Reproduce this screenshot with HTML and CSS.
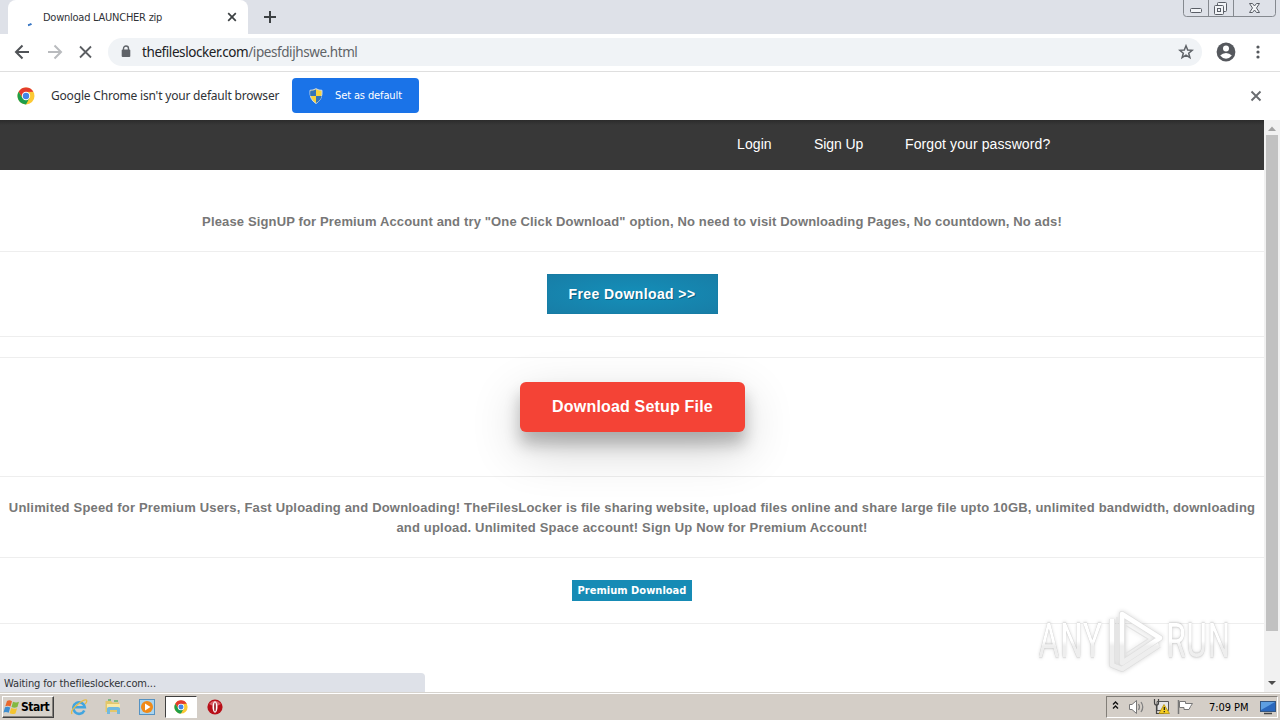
FILE: index.html
```html
<!DOCTYPE html>
<html lang="en">
<head>
<meta charset="utf-8">
<title>Download LAUNCHER zip</title>
<link rel="stylesheet" href="styles.css">
</head>
<body>
<svg class="defs" width="0" height="0">
  <symbol id="chrome" viewBox="0 0 18 18">
    <circle cx="9" cy="9" r="8.5" fill="#fcc934"/>
    <path d="M1.6 4.8A8.5 8.5 0 0 1 16.4 4.8L9 5 5.6 11Z" fill="#e33b2e"/>
    <path d="M1.6 4.8A8.5 8.5 0 0 0 9 17.5L12.5 11 5.5 11Z" fill="#1e9e4a"/>
    <circle cx="9" cy="9" r="4.2" fill="#fff"/>
    <circle cx="9" cy="9" r="3.2" fill="#4285e8"/>
  </symbol>
  <linearGradient id="mark" x1="0" y1="0" x2="0" y2="64" gradientUnits="userSpaceOnUse">
    <stop offset=".5" stop-color="#fff"/><stop offset=".58" stop-color="#eee"/>
  </linearGradient>
</svg>
<header class="tabstrip">
  <div class="tab">
    <svg class="spinner" width="16" height="16" viewBox="0 0 16 16"><path d="M6 14.200Q8 13.900 9.500 12.800" fill="none" stroke="#3b78c4" stroke-width="2"/></svg>
    <span class="tab-title">Download LAUNCHER zip</span>
    <svg class="tab-close" width="10" height="10" viewBox="0 0 10 10"><path d="M1.200 1.200 8.800 8.800M8.800 1.200 1.200 8.800" stroke="#3c4043" stroke-width="1.700"/></svg>
  </div>
  <svg class="newtab" width="14" height="14" viewBox="0 0 14 14"><path d="M7 1V13M1 7H13" stroke="#3c4043" stroke-width="2"/></svg>
  <svg class="winbuttons" width="94" height="18" viewBox="0 0 94 18">
    <path d="M.5 0V13.500Q.5 16.500 3.500 16.500H89.500Q92.500 16.500 92.500 13.500V0M25.500 0V16M50.500 0V16" fill="none" stroke="#85898f"/>
    <g fill="#f2f4f7" stroke="#5a5e66">
      <rect x="7.500" y="8.500" width="11" height="4" rx="1"/>
      <rect x="34.500" y="2.500" width="9" height="9" rx="1"/>
      <rect x="31.500" y="5.500" width="9" height="9" rx="1"/>
      <rect x="34.500" y="8.500" width="3" height="3"/>
      <path d="M66.500 3.500H69.500L71.500 6 73.500 3.500H76.500L73.500 8 76.500 12.500H73.500L71.500 10 69.500 12.500H66.500L69.500 8Z"/>
    </g>
  </svg>
</header>
<div class="toolbar">
  <svg class="nav-icons" width="92" height="20" viewBox="0 0 92 20" fill="none" stroke-width="2">
    <path d="M15 10H2M8.500 3.500 2 10 8.500 16.500" stroke="#505357"/>
    <path d="M34 10H47M40.500 3.500 47 10 40.500 16.500" stroke="#b9bbbe"/>
    <path d="M66 4.500 77 15.500M77 4.500 66 15.500" stroke="#5b5e62" stroke-width="1.800"/>
  </svg>
  <div class="omnibox">
    <svg width="10" height="13" viewBox="0 0 10 13"><path d="M2.500 5V3.500A2.500 2.500 0 0 1 7.500 3.500V5" fill="none" stroke="#5f6368" stroke-width="1.400"/><rect x=".7" y="4.500" width="8.600" height="7.500" rx="1" fill="#5f6368"/></svg>
    <span class="url"><span class="host">thefileslocker.com</span>/ipesfdijhswe.html</span>
    <svg class="star" width="16" height="16" viewBox="0 0 16 16"><path d="M8 1.800 9.700 6 14.200 6.300 10.700 9.200 11.900 13.700 8 11.200 4.100 13.700 5.300 9.200 1.800 6.300 6.300 6Z" fill="none" stroke="#5f6368" stroke-width="1.500"/></svg>
  </div>
  <svg class="avatar" width="20" height="20" viewBox="0 0 20 20"><circle cx="10" cy="10" r="9.400" fill="#55585d"/><circle cx="10" cy="6.600" r="3" fill="#fff"/><path d="M4.200 13.600Q6.500 11 10 11T15.800 13.600Q13.500 16.700 10 16.700T4.200 13.600Z" fill="#fff"/></svg>
  <svg class="dots" width="4" height="16" viewBox="0 0 4 16" fill="#55585d"><circle cx="2" cy="3" r="1.600"/><circle cx="2" cy="8" r="1.600"/><circle cx="2" cy="13" r="1.600"/></svg>
</div>
<div class="infobar">
  <svg width="18" height="18"><use href="#chrome"/></svg>
  <span class="info-text">Google Chrome isn't your default browser</span>
  <button class="default-btn">
    <svg width="16" height="16" viewBox="0 0 16 16"><path d="M8 .7Q11 2.500 14 2.300 14.800 11.500 8 15.500 1.200 11.500 2 2.300 5 2.500 8 .7Z" fill="#f6d33c" stroke="#d4dce5"/><path d="M8 1.500V8H2.300Q1.900 5 2.400 2.800 5.500 2.800 8 1.500ZM8 8H13.700Q12.800 12.500 8 15Z" fill="#3274b9"/></svg>
    <span>Set as default</span>
  </button>
  <svg class="info-close" width="12" height="12" viewBox="0 0 12 12"><path d="M1.500 1.500 10.500 10.500M10.500 1.500 1.500 10.500" stroke="#696c70" stroke-width="1.900"/></svg>
</div>
<div class="viewport">
  <main class="page">
    <nav class="sitenav"><a class="login">Login</a><a class="signup">Sign Up</a><a class="forgot">Forgot your password?</a></nav>
    <section class="row promo"><p class="promo-text">Please SignUP for Premium Account and try "One Click Download" option, No need to visit Downloading Pages, No countdown, No ads!</p></section>
    <section class="row free"><button class="free-btn"><span>Free Download &gt;&gt;</span></button></section>
    <section class="row spacer"></section>
    <section class="row setup"><button class="setup-btn"><span>Download Setup File</span></button></section>
    <section class="row about"><p><span class="about-one">Unlimited Speed for Premium Users, Fast Uploading and Downloading! TheFilesLocker is file sharing website, upload files online and share large file upto 10GB, unlimited bandwidth, downloading</span><br><span class="about-two">and upload. Unlimited Space account! Sign Up Now for Premium Account!</span></p></section>
    <section class="row premium"><button class="premium-btn"><span>Premium Download</span></button></section>
  </main>
  <aside class="scrollbar">
    <svg width="16" height="15" viewBox="0 0 16 15"><path d="M4 11 8 6.500 12 11Z" fill="#a3a3a3"/></svg>
    <div class="thumb"></div>
    <svg class="down" width="16" height="17" viewBox="0 0 16 17"><path d="M4 6 8 10 12 6Z" fill="#4d4d4d"/></svg>
  </aside>
  <div class="status"><span>Waiting for thefileslocker.com...</span></div>
  <div class="watermark">
    <span class="wm any">ANY</span>
    <svg width="60" height="64" viewBox="0 0 60 64" fill="none" stroke-linejoin="round">
      <g stroke="#dedede" stroke-width="6"><path d="M17 5 55 29 17 54Z"/><path d="M7 10V56L17 60 54 36"/></g>
      <g stroke="url(#mark)" stroke-width="4.500"><path d="M17 5 55 29 17 54Z"/><path d="M7 10V56L17 60 54 36"/></g>
      <path d="M12 8V56M20 16 43 30 20 45Z" stroke="#e3e3e3" stroke-width="1.200"/>
    </svg>
    <span class="wm run">RUN</span>
  </div>
</div>
<footer class="taskbar">
  <button class="start">
    <svg width="18" height="16" viewBox="0 0 18 16"><path d="M4 2Q6.500.5 9 2.300L7.500 7.500Q5 6 2.300 7.200Z" fill="#e9682c"/><path d="M10 2.700Q13 4.300 16 2.800L14.400 8Q11.500 9.500 8.500 8Z" fill="#83b940"/><path d="M2 8.200Q4.800 7 7.200 8.600L5.700 13.800Q3.300 12.200.5 13.400Z" fill="#3e8ed0"/><path d="M8.200 9Q11.300 10.500 14.100 9.200L12.500 14.400Q9.500 15.700 6.600 14.300Z" fill="#f4c430"/></svg>
    <span>Start</span>
  </button>
  <div class="tasks">
    <svg class="task" width="18" height="18" viewBox="0 0 18 18"><path d="M14.300 12.500A5.800 5.800 0 1 1 14.800 9.300H5" fill="none" stroke="#42a5df" stroke-width="2.600"/><path d="M2 16Q0 13 7 7T16.500 2Q17.500 3.500 15 6" fill="none" stroke="#e7bc45" stroke-width="1.300"/></svg>
    <svg class="task" width="18" height="18" viewBox="0 0 18 18"><path d="M1.500 3H7L8.500 4.500H15V14H1.500Z" fill="#e3c76b"/><path d="M3 6H16V10H3Z" fill="#fae9a5"/><path d="M3 16V10.500Q3 9 5 9H14Q16 9 16 10.500V16H13V12H6V16Z" fill="#71b9df"/><path d="M4 2H7M10 3H14" stroke="#62b36f" stroke-width="1.500"/></svg>
    <svg class="task" width="18" height="18" viewBox="0 0 18 18"><rect x="1.500" y="1.500" width="15" height="15" fill="#a9d4ef" stroke="#5592c2"/><circle cx="9" cy="9" r="6" fill="#f08a18"/><path d="M7 5.500 12.500 9 7 12.500Z" fill="#fff"/></svg>
    <div class="active-task"><svg width="14" height="14"><use href="#chrome"/></svg></div>
    <svg class="task opera" width="18" height="18" viewBox="0 0 18 18"><circle cx="9" cy="9" r="7.600" fill="#b80f18"/><path d="M3 6Q9-.5 15 6Q12 8 9 8T3 6Z" fill="#d9636a"/><ellipse cx="9" cy="9" rx="2.500" ry="5.800" fill="#fff"/><ellipse cx="9" cy="9" rx=".8" ry="4.600" fill="#8b0a10"/></svg>
  </div>
  <div class="tray">
    <svg width="94" height="18" viewBox="0 0 94 18" fill="none">
      <path d="M6 6.500 8.500 4 11 6.500M6 10.500 8.500 8 11 10.500" stroke="#111" stroke-width="1.400"/>
      <path d="M22.500 6.500H25L29.500 2.500V15.500L25 11.500H22.500Z" fill="#fff" stroke="#777"/>
      <path d="M31.500 6Q33.500 9 31.500 12M34 4Q37.500 9 34 14" stroke="#828282" stroke-width="1.300"/>
      <path d="M50 3.500H61.500V12.500H50Z" fill="#e5e5e5" stroke="#555"/><path d="M47.500 1V5Q47.500 7 49.500 7T51.500 5V1M49.500 7V15.500H57" stroke="#444" stroke-width="1.200"/>
      <path d="M57 6.500 62.500 15.500H52Z" fill="#f5cd20" stroke="#ab8800" stroke-width=".7"/><path d="M57.300 9V12M57.300 13V14.300" stroke="#222" stroke-width="1.300"/>
      <path d="M71.500 2V16" stroke="#777" stroke-width="1.500"/><path d="M72.500 3.500H78.500V5.500H85.500L83.500 8.500 82 11.500H77V9.500H72.500Z" fill="#fff" stroke="#777"/>
    </svg>
    <span class="clock">7:09 PM</span>
    <svg class="desktop" width="16" height="16" viewBox="0 0 16 16"><rect x=".5" y="2.500" width="15" height="10" fill="#2b68bd" stroke="#345681"/><path d="M1 3H15L1 11Z" fill="#5e9fe2"/><path d="M4 14.500H12" stroke="#444" stroke-width="1.500"/></svg>
  </div>
</footer>
</body>
</html>
```
FILE: styles.css
```css
* { box-sizing: border-box; }
body { margin: 0; width: 1280px; height: 720px; overflow: hidden; display: flex; flex-direction: column; background: #fff; font-family: "DejaVu Sans Condensed", "DejaVu Sans", sans-serif; font-stretch: condensed; font-size: 11px; color: #303236; }
svg { display: block; flex: none; }
.defs { position: absolute; }
button { border: 0; margin: 0; padding: 0; display: flex; align-items: center; font: inherit; }
span, a { white-space: nowrap; }
.tabstrip { height: 34px; flex: none; background: #dee1e8; display: flex; align-items: flex-start; padding-left: 8px; }
.tab { width: 240px; height: 34px; background: #fff; border-radius: 8px 8px 0 0; display: flex; align-items: center; padding-left: 14px; flex: none; }
.spinner { margin: 3px 5px 0 0; }
.tab-title { width: 184px; letter-spacing: -.25px; }
.newtab { margin: 10px 0 0 15px; }
.winbuttons { margin: 0 3px 0 auto; }
.toolbar { height: 38px; flex: none; display: flex; align-items: center; padding: 0 20px 2px 14px; border-bottom: 1px solid #dfdfdf; }
.nav-icons { margin-right: 2px; }
.omnibox { width: 1094px; height: 28px; border-radius: 14px; background: #f0f3f6; display: flex; align-items: center; padding: 0 8px 0 13px; }
.url { margin-left: 11px; font-family: "Noto Sans", sans-serif; font-size: 13.5px; color: #606367; letter-spacing: -.42px; }
.host { color: #202124; }
.star { margin-left: auto; }
.avatar { margin-left: 14px; }
.dots { margin-left: auto; }
.infobar { height: 48px; flex: none; display: flex; align-items: center; padding: 0 18px 1px 17px; }
.info-text { margin-left: 16px; width: 241px; font-family: "Noto Sans", sans-serif; font-size: 12px; letter-spacing: -.19px; }
.default-btn { width: 127px; height: 35px; background: #1a73e8; border-radius: 4px; color: #fff; padding-left: 16px; gap: 11px; letter-spacing: -.12px; }
.info-close { margin-left: auto; }
.viewport { height: 572px; flex: none; display: flex; position: relative; }
.page { width: 1264px; font-family: "Liberation Sans", Arial, sans-serif; }
.sitenav { height: 50px; background: linear-gradient(#2b2b2b, #383838 5px); color: #fff; display: flex; align-items: center; padding: 0 0 2px 737px; font-size: 14px; letter-spacing: .1px; }
.login { width: 77px; }
.signup { width: 91px; letter-spacing: -.1px; }
.row { border-bottom: 1px solid #eee; display: flex; justify-content: center; font-weight: bold; }
.row p { margin: 0; text-align: center; color: #777; font-size: 13px; line-height: 20px; }
.promo { height: 82px; padding-top: 42px; }
.row .promo-text { letter-spacing: .143px; white-space: nowrap; }
.free { height: 85px; padding-top: 22px; }
.free-btn { width: 171px; height: 40px; background: radial-gradient(ellipse at center, #148fb9, #187da6); box-shadow: inset 0 0 1px #176481; justify-content: center; color: #fff; font-size: 14px; font-weight: bold; letter-spacing: .4px; text-shadow: 1px 1px #086184; }
.spacer { height: 21px; }
.setup { height: 119px; padding-top: 24px; }
.setup-btn { width: 225px; height: 50px; background: #f44336; border-radius: 6px; justify-content: center; color: #fff; font-size: 16px; font-weight: bold; letter-spacing: .18px; box-shadow: 0 12px 16px rgba(0,0,0,.24), 0 17px 50px rgba(0,0,0,.19); margin-left: 1px; }
.about { height: 81px; padding-top: 21px; }
.about-one { letter-spacing: .187px; }
.about-two { letter-spacing: .177px; }
.premium { height: 66px; padding-top: 22px; }
.premium-btn { width: 120px; height: 21px; background: #168bb5; justify-content: center; color: #fff; font-family: "DejaVu Sans Condensed", sans-serif; font-size: 11px; font-weight: bold; letter-spacing: .02px; }
.scrollbar { width: 16px; background: #f1f1f1; display: flex; flex-direction: column; }
.thumb { width: 12px; height: 496px; margin-left: 2px; background: #c1c1c1; }
.down { margin-top: auto; }
.status { position: absolute; left: 0; bottom: 0; width: 425px; height: 19px; background: #dee1e8; border-top-right-radius: 4px; padding: 4px; line-height: 13px; letter-spacing: -.12px; }
.watermark { position: absolute; left: 1038px; top: 488px; height: 66px; display: flex; align-items: center; }
.watermark svg { margin-left: 3px; filter: drop-shadow(0 0 2px rgba(0,0,0,.16)); }
.wm { display: block; font-family: Roboto, sans-serif; font-size: 49px; line-height: 64px; color: transparent; background: linear-gradient(#fff 50%, #eee 58%); background-clip: text; -webkit-background-clip: text; filter: drop-shadow(0 0 1px rgba(0,0,0,.22)) drop-shadow(0 0 2px rgba(0,0,0,.16)); transform: scaleX(.77); transform-origin: left; }
.any { width: 86px; margin-right: -22px; }
.run { margin-left: 1px; transform: scaleX(.79); }
.run { margin-right: -20px; transform: scaleX(.77); }
.taskbar { height: 28px; flex: none; background: #d4cec7; border-top: 1px solid #d6d3ce; box-shadow: inset 0 1px #fff; display: flex; padding: 3px 2px 1px; }
.start { width: 52px; height: 22px; background: #d6d1ca; border: 1px solid; border-color: #fff #404040 #404040 #fff; box-shadow: inset -1px -1px #85817c; padding-left: 0; font-size: 12px; font-weight: bold; color: #000; letter-spacing: -.5px; }
.tasks { display: flex; align-items: center; margin-left: 16px; height: 22px; }
.task { margin-right: 16px; }
.task:nth-child(3) { margin-right: 9px; }
.active-task { width: 32px; height: 22px; background: #fff; border: 1px solid; border-color: #404040 #fff #fff #404040; padding: 3px 8px; }
.task.opera { margin: 0 0 0 9px; }
.tray { margin-left: auto; width: 172px; height: 22px; border: 1px solid; border-color: #827e78 #fff #fff #827e78; display: flex; align-items: center; color: #000; }
.clock { margin-left: 8px; letter-spacing: -.05px; width: 44px; }
.desktop { margin-left: 7px; }
```
